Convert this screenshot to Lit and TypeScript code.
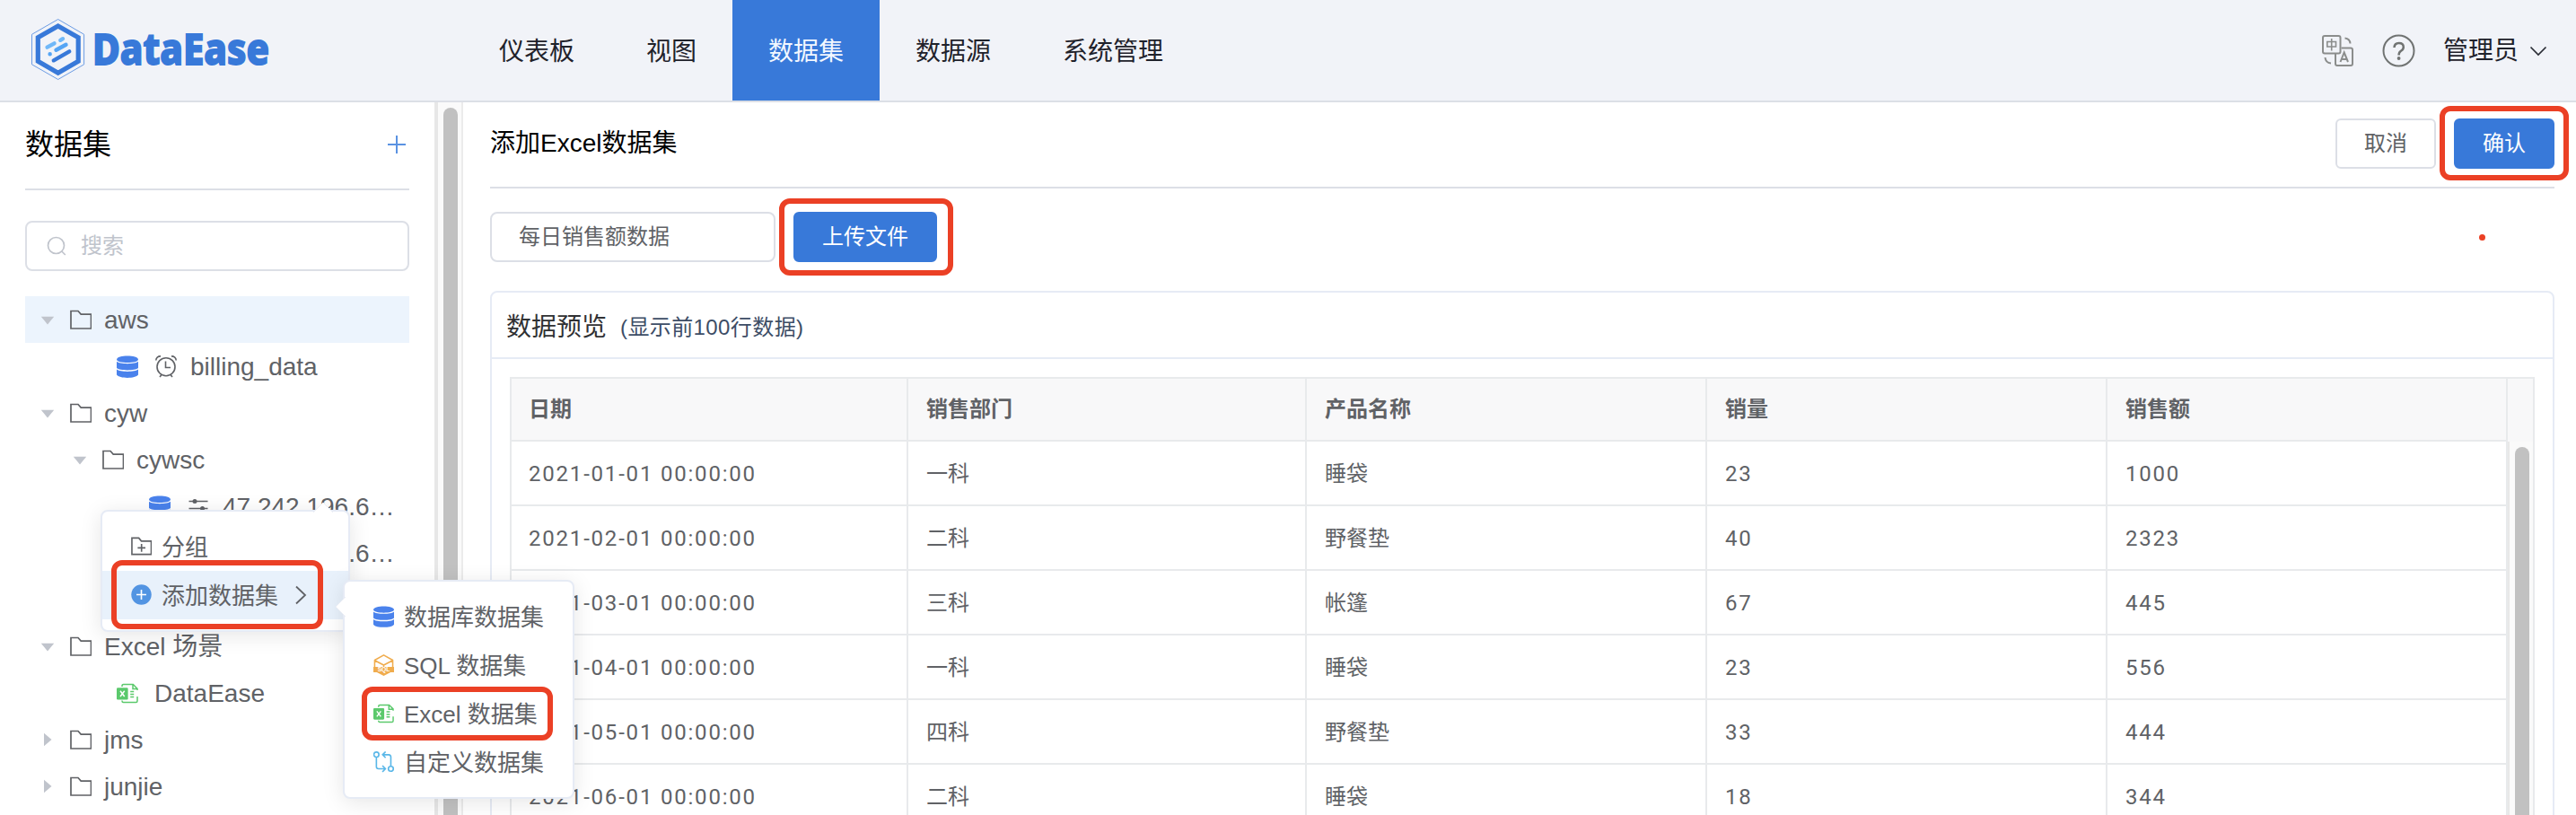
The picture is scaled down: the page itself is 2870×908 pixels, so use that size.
import { LitElement, html, css, svg, nothing } from "lit";
import { customElement, property } from "lit/decorators.js";

const icons: Record<string, unknown> = {
  folder: svg`<path d="M1 2.500h8l3.200 3.600H23.500V22H1z" fill="none" stroke="#606266" stroke-width="1.700"/>`,
  folderPlus: svg`<path d="M1 2.500h8l3 3.600H23.500V21.500H1z" fill="none" stroke="#606266" stroke-width="1.700"/><path d="M12.200 9.400v9M7.700 13.900h9" stroke="#606266" stroke-width="1.700"/>`,
  db: svg`<path d="M0 4.500C0-1 24-1 24 4.500C24 9.200 0 9.200 0 4.500z" fill="#4a82ec"/><path d="M0 6.800C3 10 21 10 24 6.800V14C21 17.200 3 17.200 0 14z" fill="#4a82ec"/><path d="M0 15.600C3 18.800 21 18.800 24 15.600V21.500C21 26 3 26 0 21.500z" fill="#4a82ec"/>`,
  clock: svg`<g fill="none" stroke="#606266" stroke-width="1.600"><circle cx="12" cy="12.700" r="10"/><path d="M11.500 6.500V13.500H17M7 21.500L5 24M17 21.500L19 24M.8 5.500C.8 2.500 3 .8 6 .9M23.200 5.500C23.200 2.500 21 .8 18 .9"/></g>`,
  sliders: svg`<path d="M1.500 6.500h21M1.500 14.500h21" stroke="#606266" stroke-width="1.600"/><circle cx="8" cy="6.500" r="2.500" fill="#606266"/><circle cx="16.500" cy="14.500" r="2.500" fill="#606266"/>`,
  excel: svg`<g fill="none" stroke="#5bc96c" stroke-width="1.500"><path d="M6 5V4Q6 2.500 7.500 2.500H18.300L23 7.200V9M6 20.500V21Q6 22.500 7.500 22.500H21.500Q23 22.500 23 21V16M18 2.800V7.500H22.800M15.200 10.500h4M15.200 13.500h4M15.200 16.500h4"/></g><rect x="0" y="6.200" width="12.600" height="13.300" rx="1.200" fill="#5bc96c"/><path d="M4 9.800l4.700 6.200M8.700 9.800l-4.700 6.200" stroke="#fff" stroke-width="1.500"/>`,
  sql: svg`<g fill="none" stroke="#f0ac4d" stroke-width="1.600" stroke-linejoin="round"><path d="M1.500 15V6.800L12 .9L22.500 6.800V15M1.500 7L12 12.500L22.500 7M12 12.500V15"/></g><path d="M0 14.500H24V20.800H20L12 25L4 20.800H0z" fill="#f0ac4d"/><text x="12" y="20.200" font-size="7" text-anchor="middle" fill="#fff" font-weight="700" font-family="Liberation Sans, sans-serif">SQL</text>`,
  custom: svg`<g fill="none" stroke="#5ab7e8" stroke-width="1.700"><circle cx="3.500" cy="3.800" r="2.900"/><circle cx="20.300" cy="20.300" r="2.900"/><path d="M3.500 7V18Q3.500 20.300 6 20.300H13.500M10.500 16.700L14 20.300L10.500 24M20.300 17V6.500Q20.300 4 17.800 4H11M14.200 .500L10.700 4L14.200 7.600"/></g>`,
  plusCircle: svg`<circle cx="12" cy="12" r="11.700" fill="#5294e2"/><path d="M12 6.300v11.400M6.300 12h11.400" stroke="#fff" stroke-width="1.700"/>`,
};

const icon = (name: string, w = 24, h = 25) =>
  html`<svg class="ico" width=${w} height=${h} viewBox="0 0 24 25">${icons[name]}</svg>`;

const sans = css`"Liberation Sans", "Noto Sans CJK SC", sans-serif`;

interface Node { label: string; level: number; state?: "open" | "closed"; icons: string[]; selected?: boolean }

const nodes: Node[] = [
  { label: "aws", level: 0, state: "open", icons: ["folder"], selected: true },
  { label: "billing_data", level: 1, icons: ["db", "clock"] },
  { label: "cyw", level: 0, state: "open", icons: ["folder"] },
  { label: "cywsc", level: 1, state: "open", icons: ["folder"] },
  { label: "47.242.196.6…", level: 2, icons: ["db", "sliders"] },
  { label: "47.242.196.6…", level: 2, icons: ["db", "sliders"] },
  { label: "", level: 2, icons: [] },
  { label: "Excel 场景", level: 0, state: "open", icons: ["folder"] },
  { label: "DataEase", level: 1, icons: ["excel"] },
  { label: "jms", level: 0, state: "closed", icons: ["folder"] },
  { label: "junjie", level: 0, state: "closed", icons: ["folder"] },
];

@customElement("de-header")
class DeHeader extends LitElement {
  static styles = css`
    :host { display: flex; height: 112px; flex: none; background: #f1f3f8; border-bottom: 2px solid #dcdfe6; font: 28px/112px ${sans}; color: #1f222b; }
    .logo { width: 516px; flex: none; }
    .logo svg { display: block; }
    .nav { display: flex; flex: 1; }
    .item { padding: 2px 40px 0; height: 110px; white-space: nowrap; }
    .item.on { background: #3879d9; color: #f2f7ff; }
    .tools { display: flex; align-items: center; padding-right: 32px; }
    .lang { margin-right: 32px; }
    .help { margin-right: 31px; }
    .user { padding-top: 2px; }
    .chev { margin-left: 12px; }
  `;
  render() {
    return html`
      <div class="logo">
        <svg width="480" height="112" viewBox="0 0 480 112">
          <path d="M64.700 21.500L93.600 38.300V71.800L64.700 88.500L35.500 71.800V38.300z" fill="none" stroke="#6c9ce4" stroke-width="1"/>
          <path d="M64.700 28.900L87.200 41.800V68.300L64.700 81.200L42.300 68.300V41.800z" fill="none" stroke="#3879d9" stroke-width="5.200"/>
          <g stroke-width="4.400" stroke-linecap="round">
            <path d="M52.600 52.700L60.500 48.300M67.300 44.800L70 43.200" stroke="#70b8f8"/>
            <path d="M62.500 55.800L73.500 49.800M55.600 60.200h.1" stroke="#55a5f5"/>
            <path d="M59.800 67.300L77.200 57.300" stroke="#3879d9"/>
          </g>
          <text x="103" y="71.700" font-family="Noto Sans, sans-serif" font-weight="800" font-size="48.500" textLength="197" lengthAdjust="spacingAndGlyphs" fill="#3879d9" stroke="#3879d9" stroke-width="1.800">DataEase</text>
        </svg>
      </div>
      <nav class="nav">
        ${["仪表板", "视图", "数据集", "数据源", "系统管理"].map(
          (t) => html`<span class="item ${t === "数据集" ? "on" : ""}">${t}</span>`
        )}
      </nav>
      <div class="tools">
        <svg class="lang" width="36" height="36" viewBox="0 0 36 36" fill="none" stroke="#8b8d8c" stroke-width="2">
          <rect x="2" y="2" width="19.500" height="19.500" rx="2"/>
          <path d="M22.500 15.500H33Q35 15.500 35 17.500V33Q35 35 33 35H18Q16 35 16 33V22"/>
          <path d="M26.500 4.500Q32 5 32.500 10.500M4.500 26Q5 32 11 32.500"/>
          <path d="M6.800 8.500H16.500V14H6.800zM11.700 5V18.500" stroke-width="1.600"/>
          <path d="M21.500 31L25.700 20.500L30 31M23 28h5.500" stroke-width="2"/>
        </svg>
        <svg class="help" width="37" height="37" viewBox="0 0 37 37" fill="none" stroke="#707372" stroke-width="2">
          <circle cx="18.500" cy="18.500" r="17"/>
          <path d="M13.500 15Q13.700 10 18.700 10Q23.800 10 23.800 14.500Q23.800 17 21 18.800Q18.600 20.300 18.600 23.500" stroke-width="2.500"/>
          <circle cx="18.600" cy="27" r="1.900" fill="#707372" stroke="none"/>
        </svg>
        <span class="user">管理员</span>
        <svg class="chev" width="20" height="14" viewBox="0 0 20 14" fill="none" stroke="#2a2d35" stroke-width="1.700"><path d="M1.500 3.500L10 12L18.500 3.500"/></svg>
      </div>`;
  }
}

@customElement("de-sidebar")
class DeSidebar extends LitElement {
  static styles = css`
    :host { display: flex; flex: none; width: 516px; font: 28px/52px ${sans}; color: #606266; overflow: hidden; }
    .panel { flex: 1; padding: 0 28px; min-width: 0; }
    .head { display: flex; justify-content: space-between; align-items: center; height: 98px; padding: 0 4px 2px 0; border-bottom: 2px solid #dcdfe6; font-size: 32px; color: #000; box-sizing: border-box; }
    .search { display: flex; align-items: center; gap: 16px; margin: 34px 0 28px; height: 56px; box-sizing: border-box; border: 2px solid #dcdfe6; border-radius: 8px; padding-left: 22px; font-size: 24px; color: #c0c4cc; }
    .row { display: flex; height: 52px; align-items: center; white-space: nowrap; }
    .row span { padding-top: 2px; }
    .row.sel { background: #ecf4fd; }
    .l0 { padding-left: 17px; } .l1 { padding-left: 53px; } .l2 { padding-left: 89px; }
    .arrow { width: 16px; flex: none; margin-right: 17px; display: block; }
    .ico { flex: none; margin-right: 14px; display: block; }
    .leaf .ico { margin: 0 18px 0 0; }
    .leaf .ico + .ico { margin: 0 15px 0 1px; }
    .leaf .arrow { margin-right: 33px; }
    .bar { width: 16px; flex: none; border-left: 4px solid #e7e7e7; border-right: 2px solid #ebebeb; background: #fafafa; padding: 6px 4px 0 6px; }
    .thumb { height: 1200px; border-radius: 8px; background: #c1c1c1; }
  `;
  render() {
    return html`
      <div class="panel">
        <div class="head"><span>数据集</span>
          <svg width="20" height="20" viewBox="0 0 20 20" stroke="#5a92e2" stroke-width="2"><path d="M10 0v20M0 10h20"/></svg>
        </div>
        <div class="search">
          <svg width="22" height="22" viewBox="0 0 22 22" fill="none" stroke="#c0c4cc" stroke-width="1.700"><circle cx="10.500" cy="10.500" r="9"/><path d="M16.800 17L20.800 21"/></svg>
          搜索
        </div>
        ${nodes.map(
          (n) => html`<div class="row l${n.level} ${n.selected ? "sel" : ""} ${n.state ? "" : "leaf"}">
            <svg class="arrow" width="16" height="16" viewBox="0 0 16 16" fill="#c0c4cc">
              ${n.state === "open" ? svg`<path d="M.800 4.800H15.200L8 13.500z"/>` : n.state === "closed" ? svg`<path d="M4 .800V15.200L12.500 8z"/>` : nothing}
            </svg>
            ${n.icons.map((i) => icon(i))}<span>${n.label}</span>
          </div>`
        )}
      </div>
      <div class="bar"><div class="thumb"></div></div>`;
  }
}

const rows = [
  ["2021-01-01 00:00:00", "一科", "睡袋", "23", "1000"],
  ["2021-02-01 00:00:00", "二科", "野餐垫", "40", "2323"],
  ["2021-03-01 00:00:00", "三科", "帐篷", "67", "445"],
  ["2021-04-01 00:00:00", "一科", "睡袋", "23", "556"],
  ["2021-05-01 00:00:00", "四科", "野餐垫", "33", "444"],
  ["2021-06-01 00:00:00", "二科", "睡袋", "18", "344"],
];

@customElement("de-preview")
class DePreview extends LitElement {
  static styles = css`
    :host { display: block; height: 700px; box-sizing: border-box; border: 2px solid #e6ebf5; border-radius: 8px 8px 0 0; font: 24px/36px ${sans}; color: #606266; }
    .title { height: 72px; box-sizing: content-box; padding-left: 16px; display: flex; align-items: center; gap: 15px; border-bottom: 2px solid #e6ebf5; font-size: 28px; color: #303133; }
    .title span { padding-top: 5px; }
    .note { font-size: 24px; color: #3d4d66; letter-spacing: 0.400px; }
    .table { margin: 20px 20px 0; border: 2px solid #e8eaec; display: flex; flex-direction: column; }
    .thead { display: flex; background: #f8f8f9; height: 70px; font-weight: 600; }
    .cell { width: 446px; flex: none; box-sizing: border-box; border-right: 2px solid #e8eaec; border-bottom: 2px solid #e8eaec; padding-left: 20px; line-height: 72px; }
    .cell:first-child { width: 442px; padding-left: 19px; }
    .cell:nth-child(2) { width: 444px; }
    .thead .cell { line-height: 68px; }
    .body { display: flex; }
    .tr { display: flex; height: 72px; font-family: Roboto, "Noto Sans CJK SC", sans-serif; }
    .num { letter-spacing: 1.800px; }
    .bar { flex: 1; border-left: 2px solid #e8e8e8; background: #fafafa; padding: 6px 4px 0 6px; }
    .thumb { height: 600px; border-radius: 8px; background: #c1c1c1; }
  `;
  render() {
    return html`
      <div class="title"><span>数据预览</span><span class="note">(显示前100行数据)</span></div>
      <div class="table">
        <div class="thead">${["日期", "销售部门", "产品名称", "销量", "销售额"].map((t) => html`<div class="cell">${t}</div>`)}</div>
        <div class="body">
          <div>${rows.map((r) => html`<div class="tr">${r.map((c) => html`<div class="cell ${/^\d/.test(c) ? "num" : ""}">${c}</div>`)}</div>`)}</div>
          <div class="bar"><div class="thumb"></div></div>
        </div>
      </div>`;
  }
}

@customElement("de-menu")
class DeMenu extends LitElement {
  @property({ attribute: false }) items: { icon: string; label: string; active?: boolean }[] = [];
  @property() arrow = "top";
  static styles = css`
    :host { display: block; box-sizing: border-box; border: 2px solid #e6ebf5; border-radius: 8px; background: #fff; padding: 12px 0; font: 26px/54px ${sans}; color: #606266; box-shadow: 0 4px 24px rgba(0, 0, 0, 0.1); }
    .item { display: flex; align-items: center; height: 54px; padding-left: 32px; white-space: nowrap; }
    .item.active { background: #e8f1fb; }
    .item span { padding-top: 1px; }
    .ico { margin-right: 11px; flex: none; }
    .more { margin-left: 18px; }
    .tip { position: absolute; fill: #fff; stroke: #ebeef5; stroke-width: 1; }
    .tip.top { left: 235px; top: -11px; }
    .tip.left { left: -11px; top: 17px; }
  `;
  render() {
    return html`
      ${this.arrow === "top"
        ? html`<svg class="tip top" width="22" height="12"><path d="M0 12L11 1L22 12"/></svg>`
        : html`<svg class="tip left" width="12" height="22"><path d="M12 0L1 11L12 22"/></svg>`}
      ${this.items.map(
        (i) => html`<div class="item ${i.active ? "active" : ""}">${icon(i.icon, 23, 24)}<span>${i.label}</span>
          ${i.active ? html`<svg class="more" width="14" height="22" viewBox="0 0 14 22" fill="none" stroke="#606266" stroke-width="1.800"><path d="M2 1.500L12 11L2 20.500"/></svg>` : nothing}
        </div>`
      )}`;
  }
}

@customElement("app-root")
class AppRoot extends LitElement {
  static styles = css`
    :host { display: flex; flex-direction: column; position: relative; width: 2870px; height: 908px; overflow: hidden; background: #fff; font: 24px/36px ${sans}; color: #606266; }
    .page { display: flex; flex: 1; min-height: 0; }
    .main { flex: 1; padding: 0 24px 0 30px; min-width: 0; }
    .head { display: flex; align-items: center; height: 94px; border-bottom: 2px solid #dcdfe6; font-size: 28px; color: #000; }
    .head .name { flex: 1; padding-bottom: 2px; }
    .btn { height: 56px; width: 112px; box-sizing: border-box; border: 2px solid #dcdfe6; border-radius: 6px; font-size: 24px; line-height: 52px; text-align: center; color: #606266; margin-right: 20px; }
    .btn.primary { background: #3879d9; border-color: #3879d9; color: #fff; margin-right: 0; }
    .head .btn { margin-bottom: 2px; }
    .form { display: flex; gap: 20px; padding: 26px 0 32px; }
    .input { width: 318px; height: 56px; box-sizing: border-box; border: 2px solid #dcdfe6; border-radius: 8px; padding-left: 30px; line-height: 52px; }
    .form .btn { width: 160px; }
    .float { position: absolute; }
    .m1 { left: 112px; top: 568px; width: 278px; height: 136px; }
    .m2 { left: 382px; top: 646px; width: 258px; height: 244px; }
    .mark { position: absolute; box-sizing: border-box; border: 6px solid #eb4025; border-radius: 12px; }
    .k1 { left: 2718px; top: 118px; width: 144px; height: 83px; }
    .k2 { left: 868px; top: 221px; width: 194px; height: 86px; }
    .k3 { left: 124px; top: 624px; width: 236px; height: 77px; }
    .k4 { left: 403px; top: 765px; width: 213px; height: 60px; }
    .dot { position: absolute; left: 2762px; top: 261px; width: 7px; height: 7px; border-radius: 50%; background: #eb4025; }
  `;
  render() {
    return html`
      <de-header></de-header>
      <div class="page">
        <de-sidebar></de-sidebar>
        <div class="main">
          <div class="head"><span class="name">添加Excel数据集</span><span class="btn">取消</span><span class="btn primary">确认</span></div>
          <div class="form"><div class="input">每日销售额数据</div><div class="btn primary">上传文件</div></div>
          <de-preview></de-preview>
        </div>
      </div>
      <de-menu class="float m1" arrow="top" .items=${[
        { icon: "folderPlus", label: "分组" },
        { icon: "plusCircle", label: "添加数据集", active: true },
      ]}></de-menu>
      <de-menu class="float m2" arrow="left" .items=${[
        { icon: "db", label: "数据库数据集" },
        { icon: "sql", label: "SQL 数据集" },
        { icon: "excel", label: "Excel 数据集" },
        { icon: "custom", label: "自定义数据集" },
      ]}></de-menu>
      <div class="mark k1"></div><div class="mark k2"></div><div class="mark k3"></div><div class="mark k4"></div>
      <div class="dot"></div>`;
  }
}
